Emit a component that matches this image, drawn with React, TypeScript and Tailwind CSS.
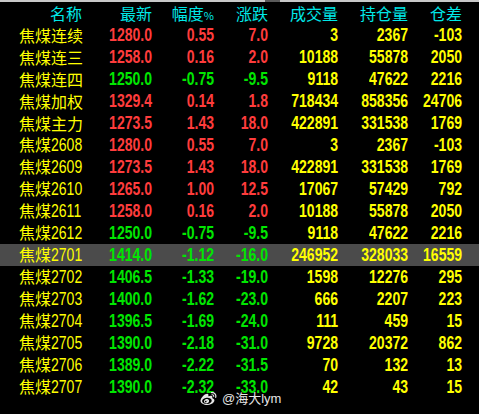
import { FaWeibo } from 'react-icons/fa';

type Row = {
  name: string;
  code?: string;
  last: string;
  pct: string;
  chg: string;
  vol: string;
  oi: string;
  diff: string;
  up: boolean;
  active?: boolean;
};

const rows: Row[] = [
  { name: '焦煤连续', last: '1280.0', pct: '0.55', chg: '7.0', vol: '3', oi: '2367', diff: '-103', up: true },
  { name: '焦煤连三', last: '1258.0', pct: '0.16', chg: '2.0', vol: '10188', oi: '55878', diff: '2050', up: true },
  { name: '焦煤连四', last: '1250.0', pct: '-0.75', chg: '-9.5', vol: '9118', oi: '47622', diff: '2216', up: false },
  { name: '焦煤加权', last: '1329.4', pct: '0.14', chg: '1.8', vol: '718434', oi: '858356', diff: '24706', up: true },
  { name: '焦煤主力', last: '1273.5', pct: '1.43', chg: '18.0', vol: '422891', oi: '331538', diff: '1769', up: true },
  { name: '焦煤', code: '2608', last: '1280.0', pct: '0.55', chg: '7.0', vol: '3', oi: '2367', diff: '-103', up: true },
  { name: '焦煤', code: '2609', last: '1273.5', pct: '1.43', chg: '18.0', vol: '422891', oi: '331538', diff: '1769', up: true },
  { name: '焦煤', code: '2610', last: '1265.0', pct: '1.00', chg: '12.5', vol: '17067', oi: '57429', diff: '792', up: true },
  { name: '焦煤', code: '2611', last: '1258.0', pct: '0.16', chg: '2.0', vol: '10188', oi: '55878', diff: '2050', up: true },
  { name: '焦煤', code: '2612', last: '1250.0', pct: '-0.75', chg: '-9.5', vol: '9118', oi: '47622', diff: '2216', up: false },
  { name: '焦煤', code: '2701', last: '1414.0', pct: '-1.12', chg: '-16.0', vol: '246952', oi: '328033', diff: '16559', up: false, active: true },
  { name: '焦煤', code: '2702', last: '1406.5', pct: '-1.33', chg: '-19.0', vol: '1598', oi: '12276', diff: '295', up: false },
  { name: '焦煤', code: '2703', last: '1400.0', pct: '-1.62', chg: '-23.0', vol: '666', oi: '2207', diff: '223', up: false },
  { name: '焦煤', code: '2704', last: '1396.5', pct: '-1.69', chg: '-24.0', vol: '111', oi: '459', diff: '15', up: false },
  { name: '焦煤', code: '2705', last: '1390.0', pct: '-2.18', chg: '-31.0', vol: '9728', oi: '20372', diff: '862', up: false },
  { name: '焦煤', code: '2706', last: '1389.0', pct: '-2.22', chg: '-31.5', vol: '70', oi: '132', diff: '13', up: false },
  { name: '焦煤', code: '2707', last: '1390.0', pct: '-2.32', chg: '-33.0', vol: '42', oi: '43', diff: '15', up: false },
];

const headers = ['最新', '幅度%', '涨跌', '成交量', '持仓量', '仓差'];

function Num({ value, className }: { value: string; className: string }) {
  return (
    <div className="text-right">
      <span className={`inline-block origin-right scale-x-[0.78] font-bold text-[18px] font-['Liberation_Sans',sans-serif] ${className}`}>
        {value}
      </span>
    </div>
  );
}

export default function App() {
  return (
    <div className="relative w-[479px] h-[414px] bg-black overflow-hidden font-['Noto_Sans_CJK_SC',sans-serif]">
      {/* top frame */}
      <div className="flex h-[2px]">
        <div className="w-[265px] bg-[#c8c8c8]" />
        <div className="w-[15px] bg-[#5a5a5a]" />
        <div className="flex-1 bg-[#c8c8c8]" />
      </div>

      {/* header */}
      <div className="grid grid-cols-[82px_70px_62px_54px_70px_70px_54px] h-[22px] items-center text-[16px] leading-none text-[#00e8e8]">
        <div className="text-right">名称</div>
        {headers.map((h) => (
          <div key={h} className="text-right">
            {h === '幅度%' ? (
              <>
                幅度<span className="text-[11px]">%</span>
              </>
            ) : (
              h
            )}
          </div>
        ))}
      </div>

      {/* rows */}
      {rows.map((r, i) => {
        const tone = r.up ? 'text-[#ff3c3c]' : 'text-[#00e600]';
        return (
          <div
            key={i}
            className={`grid grid-cols-[82px_70px_62px_54px_70px_70px_54px] h-[22px] items-center leading-none ${r.active ? 'bg-[#4b4b4b]' : ''}`}
          >
            <div className="pl-[19px] text-[16px] text-[#ffff00] whitespace-nowrap">
              {r.name}
              {r.code && (
                <span className="inline-block origin-left scale-x-[0.78] text-[18px] font-['Liberation_Sans',sans-serif]">
                  {r.code}
                </span>
              )}
            </div>
            <Num value={r.last} className={tone} />
            <Num value={r.pct} className={tone} />
            <Num value={r.chg} className={tone} />
            <Num value={r.vol} className="text-[#ffff00]" />
            <Num value={r.oi} className="text-[#ffff00]" />
            <Num value={r.diff} className="text-[#ffff00]" />
          </div>
        );
      })}

      {/* watermark */}
      <div className="absolute left-[199px] top-[389px] flex items-center gap-[4px] text-[#e6e6e6] [text-shadow:0_0_2px_rgba(0,0,0,0.9)]">
        <FaWeibo className="w-[19px] h-[16px]" />
        <span className="text-[13px] font-['Liberation_Sans','Noto_Sans_CJK_SC',sans-serif]">@海大lym</span>
      </div>
    </div>
  );
}
